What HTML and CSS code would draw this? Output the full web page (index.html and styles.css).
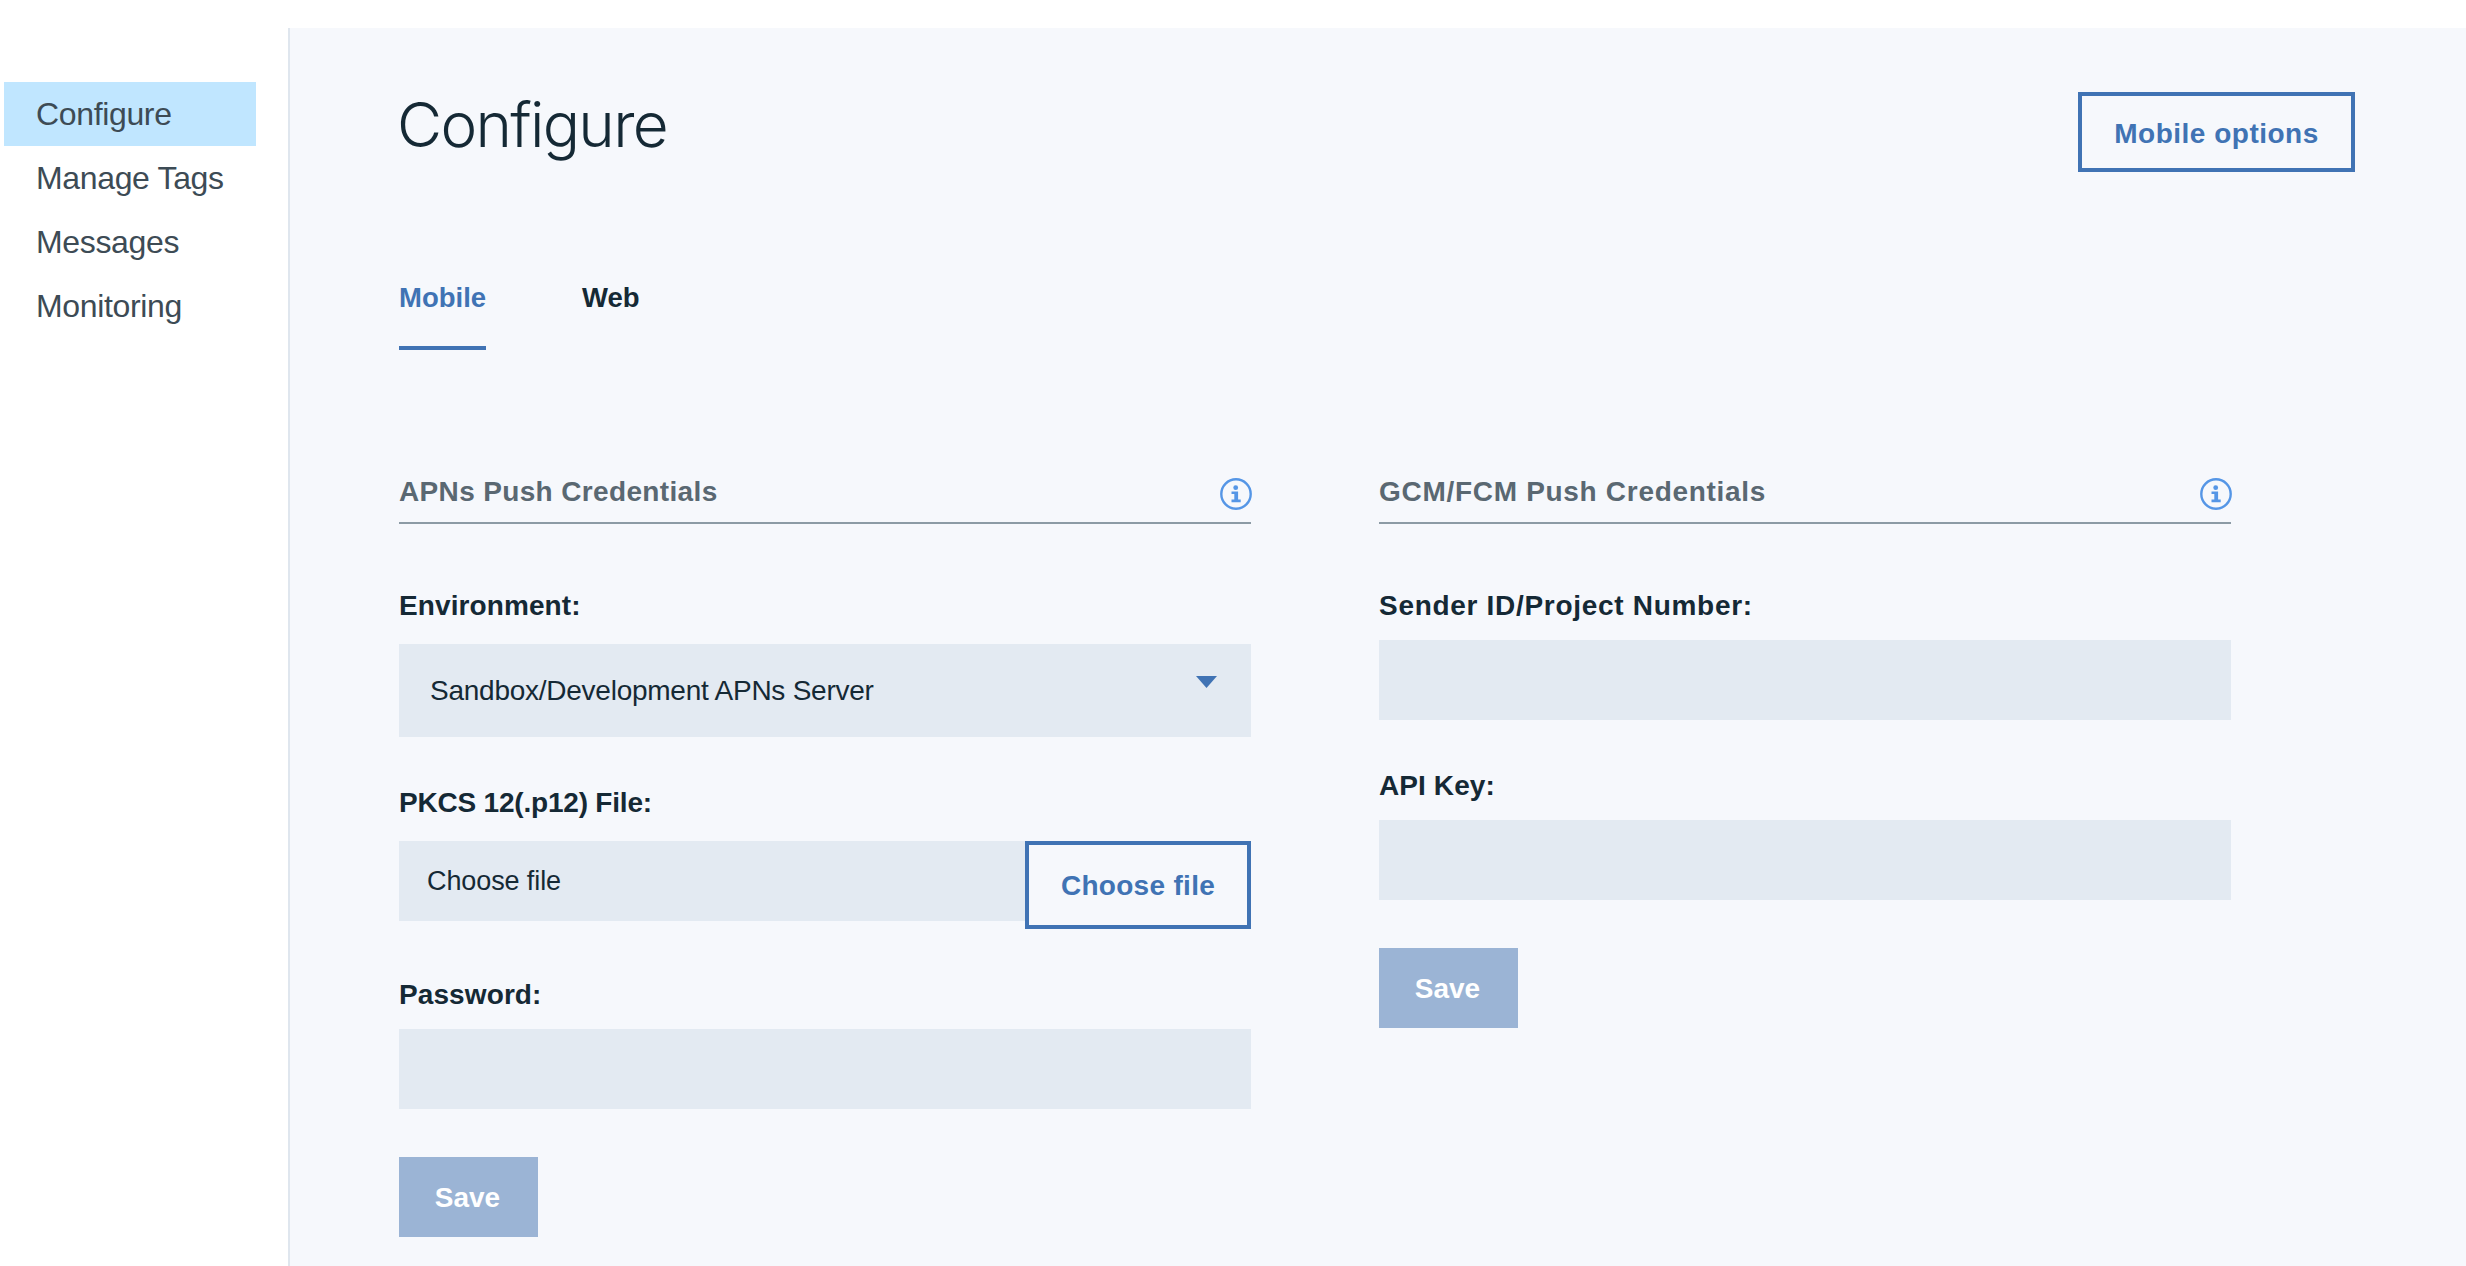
FILE: index.html
```html
<!DOCTYPE html>
<html lang="en">
<head>
    <meta charset="UTF-8">
    <title>Configure</title>
    <link rel="stylesheet" href="styles.css">
</head>
<body>

<div class="page">
    <nav class="sidebar">
        <a class="nav-item active" href="#">Configure</a>
        <a class="nav-item" href="#">Manage Tags</a>
        <a class="nav-item" href="#">Messages</a>
        <a class="nav-item" href="#">Monitoring</a>
    </nav>

    <main class="main">
        <div class="header">
            <h1 class="title">Configure</h1>
            <button class="btn-outline btn-options">Mobile options</button>
        </div>

        <div class="tabs">
            <a class="tab active" href="#">Mobile</a>
            <a class="tab" href="#">Web</a>
        </div>

        <div class="columns">
            <section class="panel">
                <div class="panel-head">
                    <h2>APNs Push Credentials</h2>
                    <svg class="info" viewBox="0 0 32 32"><circle cx="16" cy="16" r="14.7" fill="none" stroke="#5596e6" stroke-width="2.4"/><circle cx="15.7" cy="9.7" r="2.4" fill="#5596e6"/><path d="M11.5 13.4h6.6v8.1h2.6v2.7h-9.2v-2.7h2.8v-5.4h-2.8z" fill="#5596e6"/></svg>
                </div>

                <div class="field field-tall">
                    <label for="envSelect">Environment:</label>
                    <div class="select-wrap">
                        <select id="envSelect">
                            <option>Sandbox/Development APNs Server</option>
                        </select>
                        <svg class="caret" viewBox="0 0 21 12"><path d="M0 0h21L10.5 12z" fill="#4073b4"/></svg>
                    </div>
                </div>

                <div class="field field-tall">
                    <label class="label-narrow">PKCS 12(.p12) File:</label>
                    <div class="file-row">
                        <div class="file-name">Choose file</div>
                        <button class="btn-outline btn-file">Choose file</button>
                    </div>
                </div>

                <div class="field">
                    <label for="password">Password:</label>
                    <input id="password" type="password">
                </div>

                <button class="btn-save" disabled>Save</button>
            </section>

            <section class="panel">
                <div class="panel-head head-wide">
                    <h2>GCM/FCM Push Credentials</h2>
                    <svg class="info" viewBox="0 0 32 32"><circle cx="16" cy="16" r="14.7" fill="none" stroke="#5596e6" stroke-width="2.4"/><circle cx="15.7" cy="9.7" r="2.4" fill="#5596e6"/><path d="M11.5 13.4h6.6v8.1h2.6v2.7h-9.2v-2.7h2.8v-5.4h-2.8z" fill="#5596e6"/></svg>
                </div>

                <div class="field">
                    <label class="label-wide" for="senderId">Sender ID/Project Number:</label>
                    <input id="senderId" type="text">
                </div>

                <div class="field">
                    <label for="apiKey">API Key:</label>
                    <input id="apiKey" type="text">
                </div>

                <button class="btn-save" disabled>Save</button>
            </section>
        </div>
    </main>
</div>

</body>
</html>
```

FILE: styles.css
```css
* {
    box-sizing: border-box;
}

html, body {
    margin: 0;
    height: 100%;
    overflow: hidden;
    background-color: #ffffff;
}

body {
    font-family: "Liberation Sans", Arial, sans-serif;
    color: #152935;
}

.page {
    display: flex;
    height: 1266px;
    padding-top: 28px;
}

/* menu lateral */
.sidebar {
    width: 290px;
    flex-shrink: 0;
    padding: 54px 32px 0 4px;
    border-right: 2px solid #dfe6ee;
}

.nav-item {
    display: block;
    height: 64px;
    padding-left: 32px;
    font-size: 32px;
    letter-spacing: -0.35px;
    line-height: 65px;
    color: #3d4b55;
    text-decoration: none;
}

.nav-item.active {
    background-color: #c0e6ff;
}

.main {
    flex: 1;
    padding: 64px 111px 0 109px;
    background-color: #f6f8fc;
}

.header {
    display: flex;
    justify-content: space-between;
    align-items: flex-start;
}

.title {
    margin: 2px 0 0 -2px;
    font-family: Inter, "Liberation Sans", sans-serif;
    font-size: 62px;
    font-weight: 300;
    letter-spacing: -1.7px;
    line-height: 62px;
    color: #152935;
}

.btn-outline {
    background: transparent;
    border: 4px solid #4073b4;
    padding: 0;
    font-family: inherit;
    font-size: 28px;
    font-weight: bold;
    color: #4073b4;
}

.btn-options {
    width: 277px;
    height: 80px;
    padding-top: 3px;
    letter-spacing: 0.5px;
}

.tabs {
    display: flex;
    gap: 96px;
    margin-top: 110px;
}

.tab {
    padding-bottom: 32px;
    font-size: 27.5px;
    font-weight: bold;
    line-height: 32px;
    color: #152935;
    text-decoration: none;
}

.tab.active {
    color: #4073b4;
    border-bottom: 4px solid #4073b4;
}

.columns {
    display: grid;
    grid-template-columns: 852px 852px;
    gap: 128px;
    margin-top: 124px;
}

.panel-head {
    display: flex;
    justify-content: space-between;
    height: 50px;
    padding-top: 4px;
    border-bottom: 2px solid #8c9ba5;
}

.panel-head h2 {
    margin: -2px 0 0;
    font-size: 28px;
    font-weight: bold;
    letter-spacing: 0.35px;
    line-height: 32px;
    color: #5a6872;
}

.head-wide h2 {
    letter-spacing: 0.7px;
}

.info {
    width: 32px;
    height: 32px;
    margin-right: -1px;
}

.field {
    margin-top: 50px;
}

.panel-head + .field {
    margin-top: 66px;
}

.field label {
    display: block;
    margin-bottom: 18px;
    font-size: 28px;
    font-weight: bold;
    letter-spacing: 0.1px;
    line-height: 32px;
}

.field label.label-narrow {
    letter-spacing: -0.2px;
}

.field label.label-wide {
    letter-spacing: 0.7px;
}

.field-tall label {
    margin-bottom: 22px;
}

input,
select,
.file-name {
    display: block;
    width: 100%;
    height: 80px;
    border: 0;
    border-radius: 0;
    background-color: #e3eaf2;
    font-family: inherit;
    color: #152935;
}

.select-wrap {
    position: relative;
}

select {
    height: 93px;
    padding: 0 0 0 31px;
    appearance: none;
    font-size: 28px;
    letter-spacing: -0.25px;
}

.caret {
    position: absolute;
    top: 32px;
    right: 34px;
    width: 21px;
    height: 12px;
}

.file-row {
    display: flex;
    align-items: flex-start;
}

.file-name {
    flex: 1;
    padding-left: 28px;
    font-size: 27px;
    letter-spacing: -0.1px;
    line-height: 80px;
}

.btn-file {
    width: 226px;
    height: 88px;
    flex-shrink: 0;
    padding-top: 1px;
    letter-spacing: 0.3px;
}

.btn-save {
    display: block;
    width: 139px;
    height: 80px;
    margin-top: 48px;
    padding: 1px 2px 0 0;
    border: 0;
    background-color: #9bb4d5;
    font-family: inherit;
    font-size: 28px;
    font-weight: bold;
    color: #ffffff;
}
```
